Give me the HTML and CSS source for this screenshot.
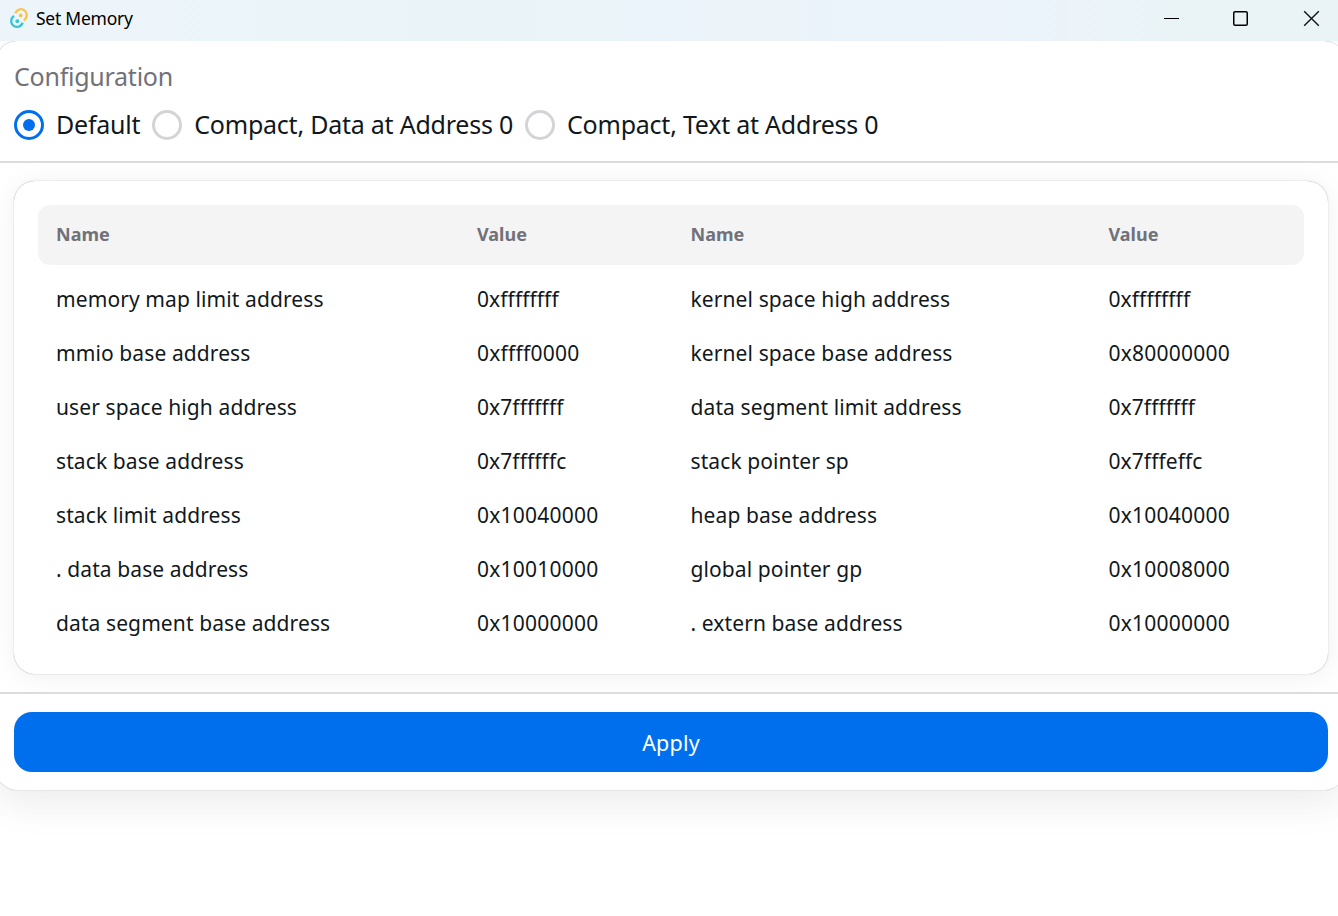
FILE: index.html
```html
<!DOCTYPE html>
<html lang="en">
<head>
<meta charset="utf-8">
<title>Set Memory</title>
<link rel="stylesheet" href="styles.css">
</head>
<body>
<header class="titlebar">
  <svg class="logo" width="20" height="22" viewBox="0 0 20 22" fill="none">
    <path d="M6.4 5.4A5.8 5.8 0 1 1 14.6 12.2" stroke="#f9c449" stroke-width="2.3"/>
    <circle cx="11.7" cy="7.5" r="1.9" fill="#f9c449"/>
    <path d="M13.6 14.6A5.8 5.8 0 1 1 5.2 8" stroke="#35c6d8" stroke-width="2.3"/>
    <circle cx="8.3" cy="13.2" r="1.9" fill="#35c6d8"/>
  </svg>
  <span class="title">Set Memory</span>
  <div class="controls">
    <svg width="17" height="17" viewBox="0 0 17 17"><path d="M1 8.5h15" stroke="#000"/></svg>
    <svg width="17" height="17" viewBox="0 0 17 17" fill="none"><rect x="1.75" y="1.75" width="13.5" height="13.5" rx="1.3" stroke="#000" stroke-width="1.5"/></svg>
    <svg width="17" height="17" viewBox="0 0 17 17"><path d="M1.2 1.2l14.6 14.6M15.8 1.2L1.2 15.8" stroke="#111" stroke-width="1.4"/></svg>
  </div>
</header>
<main class="viewport">
  <section class="panel">
    <div class="config">
      <div class="config-label">Configuration</div>
      <div class="radios">
        <label class="radio checked"><i></i><span>Default</span></label>
        <label class="radio"><i></i><span>Compact, Data at Address 0</span></label>
        <label class="radio"><i></i><span>Compact, Text at Address 0</span></label>
      </div>
    </div>
    <div class="body">
      <div class="card">
        <div class="row head"><span>Name</span><span>Value</span><span>Name</span><span>Value</span></div>
        <div class="rows">
          <div class="row"><span>memory map limit address</span><span class="val hex-f">0xffffffff</span><span>kernel space high address</span><span class="val hex-f">0xffffffff</span></div>
          <div class="row"><span>mmio base address</span><span class="val">0xffff0000</span><span>kernel space base address</span><span class="val">0x80000000</span></div>
          <div class="row"><span>user space high address</span><span class="val hex-f">0x7fffffff</span><span>data segment limit address</span><span class="val hex-f">0x7fffffff</span></div>
          <div class="row"><span>stack base address</span><span class="val hex-f">0x7ffffffc</span><span>stack pointer sp</span><span class="val hex-f">0x7fffeffc</span></div>
          <div class="row"><span>stack limit address</span><span class="val">0x10040000</span><span>heap base address</span><span class="val">0x10040000</span></div>
          <div class="row"><span>. data base address</span><span class="val">0x10010000</span><span>global pointer gp</span><span class="val">0x10008000</span></div>
          <div class="row"><span>data segment base address</span><span class="val">0x10000000</span><span>. extern base address</span><span class="val">0x10000000</span></div>
        </div>
      </div>
    </div>
    <div class="footer"><button class="apply">Apply</button></div>
  </section>
</main>
</body>
</html>
```
FILE: styles.css
```css
* { box-sizing: border-box; }
body { margin: 0; height: 916px; overflow: hidden; background: #fff; color: #11181c; font-family: "Segoe UI", "Noto Sans", "Open Sans", sans-serif; font-variant-ligatures: none; display: flex; flex-direction: column; }
.titlebar { height: 41px; flex: none; display: flex; align-items: center; padding: 0 18px 4px 9px; background: linear-gradient(90deg, #edf5fa 0%, #eaf4f8 35%, #ecf3fb 75%, #eaf4f7 88%); color: #000; }
.title { margin-left: 7px; padding-bottom: 2px; font-size: 17.5px; letter-spacing: -0.25px; }
.controls { margin-left: auto; display: flex; }
.controls svg { display: block; }
.controls svg + svg { margin-left: 52px; }
.controls svg:last-child { margin-left: 54px; }
.viewport { flex: 1; overflow: hidden; background: #fff; }
.panel { margin: 0 -7px 0 -4px; height: 749px; border-radius: 21px; background: #fff; box-shadow: 0 0 1px rgba(0,0,0,.45), 0 3px 45px rgba(0,0,0,.05), 0 20px 40px rgba(0,0,0,.04); display: flex; flex-direction: column; overflow: hidden; }
.config { height: 122px; border-bottom: 2px solid #dcdcdc; padding: 18px 18px 0; }
.config-label { height: 36px; line-height: 34px; font-size: 25px; letter-spacing: -0.25px; color: #71717a; }
.radios { display: flex; gap: 12px; margin-top: 12px; }
.radio { display: flex; align-items: center; gap: 12px; height: 36px; font-size: 25px; line-height: 34px; letter-spacing: -0.23px; white-space: nowrap; }
.radio span { padding-bottom: 2px; }
.radio i { width: 30px; height: 30px; border: 3px solid #d4d4d8; border-radius: 50%; display: flex; align-items: center; justify-content: center; }
.radio.checked i { border-color: #006fee; }
.radio.checked i::after { content: ""; width: 12px; height: 12px; border-radius: 50%; background: #006fee; }
.body { height: 531px; padding: 18px 17px 18px 18px; border-bottom: 2px solid #dcdcdc; overflow: hidden; }
.card { height: 493px; border-radius: 21px; padding: 24px; background: #fff; box-shadow: 0 0 1px rgba(0,0,0,.45), 0 0 7.5px rgba(0,0,0,.02), 0 3px 30px rgba(0,0,0,.06); }
.row { display: grid; grid-template-columns: 421px 213.5px 418px 1fr; align-items: center; height: 54px; padding-left: 18px; font-size: 21px; letter-spacing: 0.1px; white-space: nowrap; }
.row .val { letter-spacing: 0.24px; }
.row .hex-f { letter-spacing: 0.08px; }
.rows { padding-top: 7px; }
.head { height: 60px; padding-bottom: 2px; border-radius: 12px; background: #f4f4f4; color: #71717a; font-size: 18px; font-weight: 700; letter-spacing: 0; }
.footer { padding: 18px 17px 18px 18px; }
.apply { display: block; width: 100%; height: 60px; border: 0; border-radius: 18px; background: #006fee; color: #fff; font: inherit; font-size: 21.5px; letter-spacing: 0.2px; }
```
